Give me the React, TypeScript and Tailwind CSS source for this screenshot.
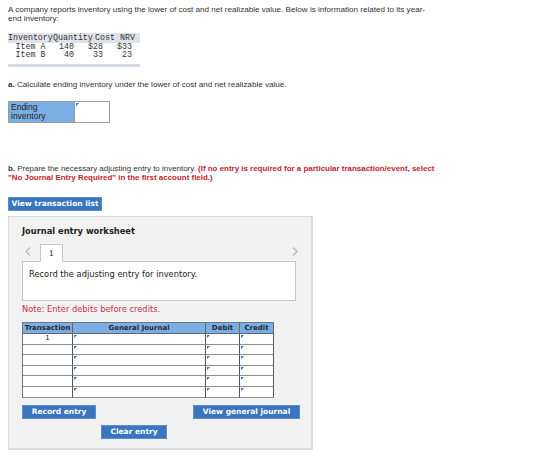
import React from "react";

const rows = [0, 1, 2, 3, 4, 5];

function Marker() {
  return (
    <span className="absolute left-[1px] top-[1px] h-0 w-0 border-t-[3px] border-r-[3px] border-t-[#2f6fd6] border-r-transparent" />
  );
}

function Chevron({ dir }: { dir: "left" | "right" }) {
  return (
    <svg width="6" height="9" viewBox="0 0 6 9" className="block">
      <path
        d={dir === "left" ? "M5 0.5 L1 4.5 L5 8.5" : "M1 0.5 L5 4.5 L1 8.5"}
        fill="none"
        stroke="#b3b3b3"
        strokeWidth="1.1"
      />
    </svg>
  );
}

function BlueButton({ label, className }: { label: string; className: string }) {
  return (
    <button
      className={
        "flex h-[14px] items-center justify-center border border-[#5a8ed0] bg-[#3a76bf] font-['DejaVu_Sans',Verdana,sans-serif] text-[7.5px] font-bold leading-none text-white " +
        className
      }
    >
      {label}
    </button>
  );
}

export default function App() {
  return (
    <div className="min-h-[467px] bg-white pl-2 pt-[5px] font-['Liberation_Sans',Arial,sans-serif] text-[#333]">
      {/* problem statement */}
      <p className="whitespace-nowrap text-[8.1px] leading-[9px]">
        A company reports inventory using the lower of cost and net realizable value. Below is information related to its year-
        <br />
        end inventory:
      </p>

      {/* inventory data */}
      <div className="mt-[10px] w-[132px] font-['Liberation_Mono','Courier_New',monospace] text-[8.3px] text-[#333]">
        <div className="flex h-[10px] items-center bg-[#dfe2ea] leading-none">
          <span className="w-[45px]">Inventory</span>
          <span className="w-[42px]">Quantity</span>
          <span className="w-[25px]">Cost</span>
          <span>NRV</span>
        </div>
        <div className="flex h-[8px] items-center leading-none">
          <span className="w-[45px] text-center">Item A</span>
          <span className="w-[21px] text-right">140</span>
          <span className="w-[29px] text-right">$28</span>
          <span className="w-[29px] text-right">$33</span>
        </div>
        <div className="flex h-[8px] items-center leading-none">
          <span className="w-[45px] text-center">Item B</span>
          <span className="w-[21px] text-right">40</span>
          <span className="w-[29px] text-right">33</span>
          <span className="w-[29px] text-right">23</span>
        </div>
        <div className="mt-[5px] h-[3px] bg-[#d5dae5]" />
      </div>

      {/* part a */}
      <p className="mt-[12.5px] text-[8.1px] leading-[9px]">
        <span className="font-bold">a.</span> Calculate ending inventory under the lower of cost and net realizable value.
      </p>

      <div className="mt-[12.5px] flex h-[22px] w-[102px] border border-[#9c9c9c]">
        <div className="w-[65px] bg-[#7aaee3] px-[2px] pt-[1px] text-[8.5px] leading-[9px] text-[#222]">
          Ending
          <br />
          inventory
        </div>
        <div className="relative flex-1 border-l border-[#9c9c9c] bg-white">
          <Marker />
        </div>
      </div>

      {/* part b */}
      <p className="mt-[41px] whitespace-nowrap text-[7.95px] leading-[9px]">
        <span className="font-bold">b.</span> Prepare the necessary adjusting entry to inventory.{" "}
        <span className="font-bold text-[#c4222c]">
          (If no entry is required for a particular transaction/event, select
          <br />
          "No Journal Entry Required" in the first account field.)
        </span>
      </p>

      <BlueButton label="View transaction list" className="mt-[15px] w-[94px]" />

      {/* worksheet */}
      <div className="mt-[5px] h-[234px] w-[305px] border border-r-2 border-b-2 border-[#dcdcdc] bg-[#f2f2f2] pl-[13px] pt-[9px] font-['DejaVu_Sans',Verdana,sans-serif]">
        <div className="text-[8.3px] font-bold leading-[10px] text-[#222]">Journal entry worksheet</div>

        <div className="mt-[7px] flex w-[276px] items-end">
          <div className="flex h-[18px] w-[18px] items-center pl-[3px] pb-[2px]">
            <Chevron dir="left" />
          </div>
          <div className="relative z-10 -mb-px flex h-[18px] w-[23px] items-center justify-center border border-b-0 border-[#c6c6c6] bg-white text-[7.5px] text-[#222]">
            1
          </div>
          <div className="flex-1" />
          <div className="flex h-[18px] items-center pb-[2px]">
            <Chevron dir="right" />
          </div>
        </div>

        <div className="h-[40px] w-[274px] border border-[#c6c6c6] bg-white pl-[6px] pt-[6.5px] text-[8.3px] leading-[10px] text-[#222]">
          Record the adjusting entry for inventory.
        </div>

        <div className="mt-[3px] text-[8.3px] leading-[10px] text-[#c4343a]">Note: Enter debits before credits.</div>

        {/* journal grid */}
        <div className="mt-[8px] w-[252px] border-l border-t border-[#777]">
          <div className="grid h-[11px] grid-cols-[50px_133px_34px_34px] bg-[#79ade3] text-[7px] font-bold leading-none text-[#1d2a3a]">
            <div className="flex items-center justify-center border-b border-r border-[#666]">Transaction</div>
            <div className="flex items-center justify-center border-b border-r border-[#666]">General Journal</div>
            <div className="flex items-center justify-center border-b border-r border-[#666]">Debit</div>
            <div className="flex items-center justify-center border-b border-r border-[#666]">Credit</div>
          </div>
          {rows.map((r) => (
            <div key={r} className="grid h-[10.6px] grid-cols-[50px_133px_34px_34px] bg-white text-[7px] leading-none text-[#222]">
              <div className="flex items-center justify-center border-b border-r border-b-[#8f8f8f] border-r-[#555]">
                {r === 0 ? "1" : ""}
              </div>
              <div className="relative border-b border-r border-b-[#8f8f8f] border-r-[#555]">
                <Marker />
              </div>
              <div className="relative border-b border-r border-b-[#8f8f8f] border-r-[#555]">
                <Marker />
              </div>
              <div className="relative border-b border-r border-b-[#8f8f8f] border-r-[#555]">
                <Marker />
              </div>
            </div>
          ))}
        </div>

        <div className="mt-[7.5px] flex w-[278px] justify-between">
          <BlueButton label="Record entry" className="w-[74px]" />
          <BlueButton label="View general journal" className="w-[107px]" />
        </div>
        <BlueButton label="Clear entry" className="ml-[79px] mt-[6px] w-[66px]" />
      </div>
    </div>
  );
}
